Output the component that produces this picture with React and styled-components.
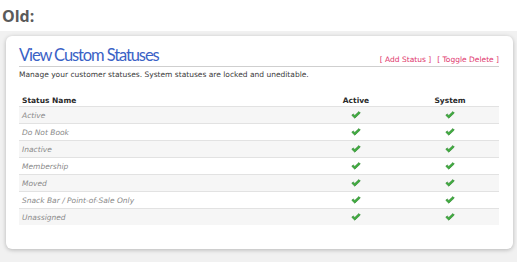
import React from 'react';
import styled, { createGlobalStyle } from 'styled-components';

const GlobalStyle = createGlobalStyle`
  html, body {
    margin: 0;
    padding: 0;
    background: #ffffff;
  }
`;

const statuses = [
  'Active',
  'Do Not Book',
  'Inactive',
  'Membership',
  'Moved',
  'Snack Bar / Point-of-Sale Only',
  'Unassigned',
];

function Check() {
  return (
    <svg width="10" height="8" viewBox="0 0 10 8">
      <path
        d="M0.8 4.3 L2.2 2.9 L3.8 4.4 L7.9 0.6 L9.3 2 L3.8 7.2 Z"
        fill="#3fae3f"
        stroke="#2b7d2b"
        strokeWidth="0.6"
        strokeLinejoin="round"
      />
    </svg>
  );
}

function App() {
  return (
    <>
      <GlobalStyle />
      <StOld>Old:</StOld>
      <StFrame>
        <StCard>
          <StHeader>
            <StTitle>View Custom Statuses</StTitle>
            <StLinks>
              <StLink>[ Add Status ]</StLink>
              <StLink>[ Toggle Delete ]</StLink>
            </StLinks>
          </StHeader>
          <StDesc>Manage your customer statuses. System statuses are locked and uneditable.</StDesc>
          <StTable>
            <thead>
              <tr>
                <StTh>Status Name</StTh>
                <StTh $center $width={84}>
                  Active
                </StTh>
                <StTh $center $width={92}>
                  System
                </StTh>
              </tr>
            </thead>
            <tbody>
              {statuses.map((name, i) => (
                <StRow key={name} $odd={i % 2 === 0}>
                  <StName>{name}</StName>
                  <StCheckCell>
                    <Check />
                  </StCheckCell>
                  <StCheckCell>
                    <Check />
                  </StCheckCell>
                </StRow>
              ))}
            </tbody>
          </StTable>
        </StCard>
      </StFrame>
    </>
  );
}

export default App;

const StOld = styled.div`
  height: 31px;
  box-sizing: border-box;
  padding: 6px 0 0 2px;
  font-family: 'Open Sans', sans-serif;
  font-weight: 700;
  font-size: 16px;
  line-height: 20px;
  color: #5a5a5a;
`;

const StFrame = styled.div`
  background: #f1f1f1;
  padding: 5px 4px 13px 6px;
  height: 231px;
  box-sizing: border-box;
`;

const StCard = styled.div`
  background: #ffffff;
  border-radius: 6px;
  box-shadow: 0 1px 4px rgba(0, 0, 0, 0.25);
  height: 213px;
  box-sizing: border-box;
  padding: 8px 14px 0 13px;
`;

const StHeader = styled.div`
  display: flex;
  justify-content: space-between;
  align-items: flex-end;
  border-bottom: 1px solid #cfcfcf;
`;

const StTitle = styled.h2`
  margin: 0;
  font-family: Lato, sans-serif;
  font-weight: 400;
  font-size: 16.5px;
  line-height: 22px;
  letter-spacing: -1.1px;
  color: #3a62c6;
`;

const StLinks = styled.div`
  display: flex;
  gap: 6px;
  padding-bottom: 1px;
`;

const StLink = styled.span`
  font-family: 'DejaVu Sans', Verdana, sans-serif;
  font-size: 7.5px;
  line-height: 10px;
  color: #e0356c;
  cursor: pointer;
`;

const StDesc = styled.p`
  margin: 2px 0 0;
  font-family: 'DejaVu Sans', Verdana, sans-serif;
  font-size: 7.5px;
  line-height: 12px;
  color: #3a3a3a;
`;

const StTable = styled.table`
  width: 100%;
  margin-top: 13px;
  border-collapse: collapse;
  font-family: 'DejaVu Sans', Verdana, sans-serif;
`;

const StTh = styled.th`
  text-align: ${(p) => (p.$center ? 'center' : 'left')};
  width: ${(p) => (p.$width ? `${p.$width}px` : 'auto')};
  padding: 0 3px;
  height: 12px;
  font-size: 7.5px;
  font-weight: 700;
  color: #2a2a2a;
`;

const StRow = styled.tr`
  background: ${(p) => (p.$odd ? '#f6f6f6' : '#ffffff')};
  border-top: 1px solid #e2e2e2;
`;

const StName = styled.td`
  padding: 0 3px;
  height: 16px;
  font-size: 7.5px;
  font-style: italic;
  color: #8a8a8a;
`;

const StCheckCell = styled.td`
  text-align: center;
  height: 16px;
  padding: 0;
  line-height: 0;
  vertical-align: middle;
`;
